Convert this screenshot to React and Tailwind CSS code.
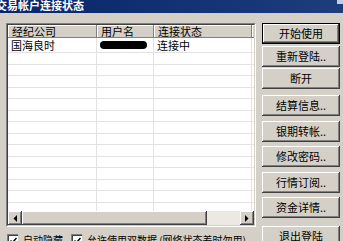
const font = { fontFamily: '"Noto Sans CJK SC", "Noto Sans", sans-serif' };

const raised =
  "bg-[#d4d0c8] shadow-[inset_-1px_-1px_#404040,inset_1px_1px_#ffffff,inset_-2px_-2px_#808080]";

function Btn({ label, primary }) {
  if (primary) {
    return (
      <div className="h-[21px] border border-black">
        <div className={`h-full flex items-center justify-center text-[11px] ${raised}`}>
          {label}
        </div>
      </div>
    );
  }
  return (
    <div className={`h-[21px] flex items-center justify-center text-[11px] ${raised}`}>
      {label}
    </div>
  );
}

function Arrow({ dir }) {
  return (
    <div className={`w-[14px] h-[14px] flex items-center justify-center ${raised}`}>
      <svg width="4" height="7" viewBox="0 0 4 7">
        {dir === "left" ? (
          <polygon points="4,0 4,7 0.5,3.5" fill="#000" />
        ) : (
          <polygon points="0,0 0,7 3.5,3.5" fill="#000" />
        )}
      </svg>
    </div>
  );
}

function Check({ label }) {
  return (
    <div className="flex items-start gap-[5px] shrink-0">
      <div className="w-[11px] h-[11px] mt-[1px] bg-white border-t border-l border-[#808080] shadow-[inset_1px_1px_#404040] flex items-center justify-center">
        <svg width="7" height="7" viewBox="0 0 7 7">
          <polyline points="0.5,3.5 2.5,5.5 6.5,1" fill="none" stroke="#000" strokeWidth="1.5" />
        </svg>
      </div>
      <span className="text-[10px] leading-[14px] whitespace-nowrap">{label}</span>
    </div>
  );
}

const cols = ["w-[89px]", "w-[57px]", "w-[98px]"];

export default function App() {
  const blankRows = Array.from({ length: 13 });

  return (
    <div
      className="w-[343px] h-[241px] bg-[#d4d0c8] overflow-hidden relative text-black"
      style={font}
    >
      {/* title bar */}
      <div className="h-[13px] bg-gradient-to-r from-[#0a246a] to-[#1d3d7c] overflow-hidden">
        <div className="text-white font-bold text-[11px] leading-[10px] ml-[-4px]">
          交易帐户连接状态
        </div>
      </div>
      <div className="absolute top-0 right-0 w-[6px] h-[4px] bg-[#c8ccd8]" />

      <div className="flex">
        {/* left side */}
        <div className="w-[256px] shrink-0 pl-[6px] pt-[10px]">
          <div className="w-[250px] h-[204px] border-t border-l border-[#808080] border-r border-b border-r-white border-b-white">
            <div className="h-full border-t border-l border-[#404040] border-r border-b border-r-[#d4d0c8] border-b-[#d4d0c8] bg-white flex flex-col">
              {/* header */}
              <div className="flex h-[13px] bg-[#d4d0c8] shrink-0">
                {["经纪公司", "用户名", "连接状态"].map((h, i) => (
                  <div
                    key={h}
                    className={`${cols[i]} h-full pl-[4px] text-[11px] leading-[13px] shadow-[inset_-1px_-1px_#808080,inset_1px_1px_#ffffff]`}
                  >
                    {h}
                  </div>
                ))}
                <div className="flex-1 h-full shadow-[inset_0_-1px_#808080,inset_1px_1px_#ffffff]" />
              </div>
              {/* row 1 */}
              <div className="flex h-[15px] shrink-0 border-b border-[#e2e2e2]">
                <div className={`${cols[0]} pl-[3px] text-[11px] leading-[14px] border-r border-[#e2e2e2]`}>
                  国海良时
                </div>
                <div className={`${cols[1]} pl-[3px] border-r border-[#e2e2e2] flex items-center`}>
                  <div className="w-[47px] h-[8px] rounded-full bg-black" />
                </div>
                <div className={`${cols[2]} pl-[3px] text-[11px] leading-[14px] border-r border-[#e2e2e2]`}>
                  连接中
                </div>
              </div>
              {blankRows.map((_, r) => (
                <div key={r} className="flex h-[11.5px] shrink-0 border-b border-[#e2e2e2]">
                  {cols.map((c, i) => (
                    <div key={i} className={`${c} border-r border-[#e2e2e2]`} />
                  ))}
                </div>
              ))}
              <div className="flex flex-1">
                {cols.map((c, i) => (
                  <div key={i} className={`${c} border-r border-[#e2e2e2]`} />
                ))}
              </div>
              {/* horizontal scrollbar */}
              <div className="flex h-[14px] shrink-0 bg-[#ece9e2]">
                <Arrow dir="left" />
                <div className={`w-[185px] h-full ${raised}`} />
                <div className="flex-1" />
                <Arrow dir="right" />
              </div>
            </div>
          </div>
          <div className="flex gap-[8px] mt-[6px] pl-[1px] w-[340px]">
            <Check label="自动隐藏" />
            <Check label="允许使用双数据 (网络状态差时勿用)" />
          </div>
        </div>

        {/* right buttons */}
        <div className="ml-[6px] pt-[10px] w-[78px] shrink-0 flex flex-col">
          <div className="flex flex-col gap-[1.5px]">
            <Btn label="开始使用" primary />
            <Btn label="重新登陆.." />
            <Btn label="断开" />
          </div>
          <div className="flex flex-col gap-[4.5px] mt-[6px]">
            <Btn label="结算信息.." />
            <Btn label="银期转帐.." />
            <Btn label="修改密码.." />
            <Btn label="行情订阅.." />
            <Btn label="资金详情.." />
          </div>
          <div className="mt-[8px]">
            <Btn label="退出登陆" />
          </div>
        </div>
      </div>
    </div>
  );
}
